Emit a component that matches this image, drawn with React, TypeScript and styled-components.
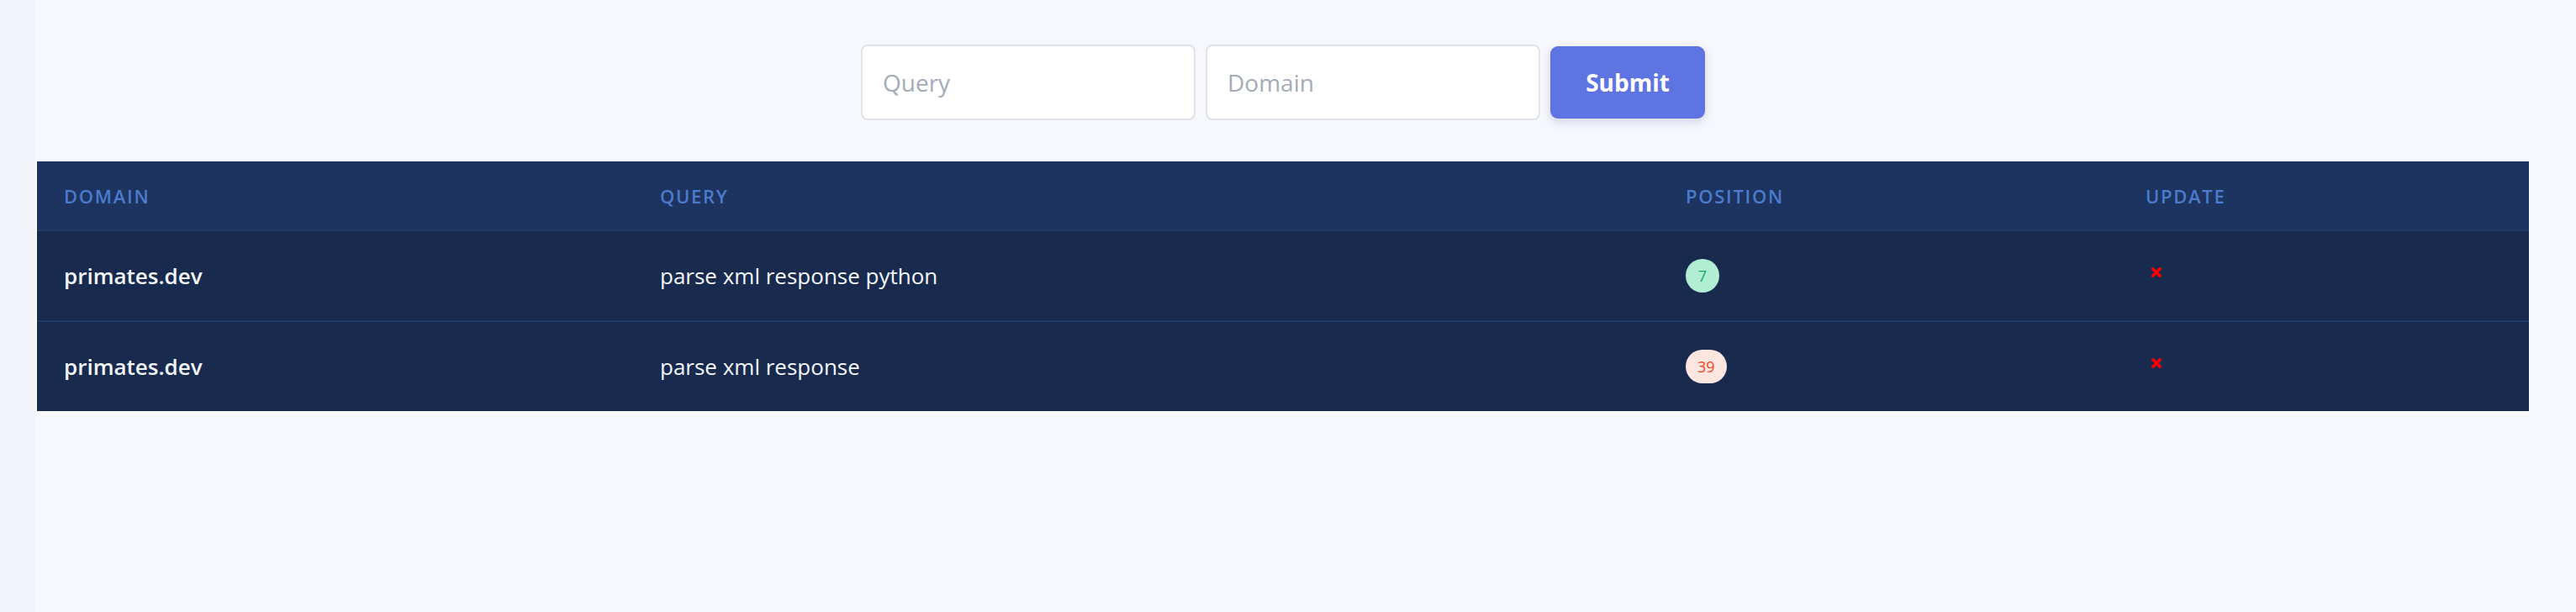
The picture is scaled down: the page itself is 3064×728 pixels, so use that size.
import React from 'react'
import styled, { createGlobalStyle } from 'styled-components'

const GlobalStyle = createGlobalStyle`
  html, body {
    margin: 0;
    padding: 0;
    background: #f7f8fd;
    font-family: 'Open Sans', 'Noto Sans', sans-serif;
  }
  * {
    box-sizing: border-box;
  }
`

const Shell = styled.div`
  display: flex;
  min-height: 728px;
`

const SideStrip = styled.div`
  width: 42px;
  flex-shrink: 0;
  background: #f3f4fa;
`

const Main = styled.main`
  flex: 1;
  padding: 53px 56px 0 2px;
`

const SearchForm = styled.form`
  display: flex;
  justify-content: center;
  align-items: center;
  gap: 12px;
`

const Field = styled.input`
  width: 398px;
  height: 90px;
  padding: 0 24px;
  border: 2px solid #dfe2e8;
  border-radius: 8px;
  background: #ffffff;
  font-family: inherit;
  font-size: 28px;
  color: #2d3748;
  outline: none;

  &::placeholder {
    color: #a3abb8;
  }
`

const SubmitButton = styled.button`
  width: 184px;
  height: 86px;
  border: none;
  border-radius: 9px;
  background: #5f74e3;
  color: #ffffff;
  font-family: inherit;
  font-size: 28px;
  font-weight: 700;
  box-shadow: 0 4px 12px rgba(70, 80, 150, 0.22);
  cursor: pointer;
`

const Table = styled.div`
  margin-top: 49px;
  background: #182b4e;
`

const cols = '709px 1220px 547px 1fr'

const HeadRow = styled.div`
  display: grid;
  grid-template-columns: ${cols};
  height: 81px;
  align-items: center;
  background: #1d3460;
`

const HeadCell = styled.div`
  padding-left: 32px;
  color: #4b7bcc;
  font-size: 22px;
  font-weight: 600;
  letter-spacing: 1.7px;
  text-transform: uppercase;
`

const Row = styled.div`
  display: grid;
  grid-template-columns: ${cols};
  height: 108px;
  align-items: center;
  border-top: 2px solid #213b69;
`

const Cell = styled.div<{ $strong?: boolean }>`
  padding-left: 32px;
  color: #f4f6fb;
  font-size: 26px;
  font-weight: ${(p) => (p.$strong ? 600 : 400)};
  display: flex;
  align-items: center;
`

const Badge = styled.span<{ $good: boolean }>`
  display: inline-flex;
  align-items: center;
  justify-content: center;
  height: 40px;
  min-width: 40px;
  padding: 0 14px;
  border-radius: 20px;
  font-size: 18px;
  background: ${(p) => (p.$good ? '#b0efd3' : '#fde6df')};
  color: ${(p) => (p.$good ? '#1ea866' : '#f2461f')};
`

const CrossMark = styled.svg`
  width: 12px;
  height: 12px;
  margin-left: 7px;
  margin-top: -9px;
`

const Cross = () => (
  <CrossMark viewBox="0 0 12 12">
    <path d="M2 2 L10 10 M10 2 L2 10" stroke="#ff0000" strokeWidth="3.6" strokeLinecap="square" />
  </CrossMark>
)

const rows = [
  { domain: 'primates.dev', query: 'parse xml response python', position: 7 },
  { domain: 'primates.dev', query: 'parse xml response', position: 39 },
]

export default function App() {
  return (
    <Shell>
      <GlobalStyle />
      <SideStrip />
      <Main>
        <SearchForm onSubmit={(e) => e.preventDefault()}>
          <Field placeholder="Query" />
          <Field placeholder="Domain" />
          <SubmitButton type="submit">Submit</SubmitButton>
        </SearchForm>
        <Table>
          <HeadRow>
            <HeadCell>Domain</HeadCell>
            <HeadCell>Query</HeadCell>
            <HeadCell>Position</HeadCell>
            <HeadCell>Update</HeadCell>
          </HeadRow>
          {rows.map((r, i) => (
            <Row key={i}>
              <Cell $strong>{r.domain}</Cell>
              <Cell>{r.query}</Cell>
              <Cell>
                <Badge $good={r.position <= 10}>{r.position}</Badge>
              </Cell>
              <Cell>
                <Cross />
              </Cell>
            </Row>
          ))}
        </Table>
      </Main>
    </Shell>
  )
}
